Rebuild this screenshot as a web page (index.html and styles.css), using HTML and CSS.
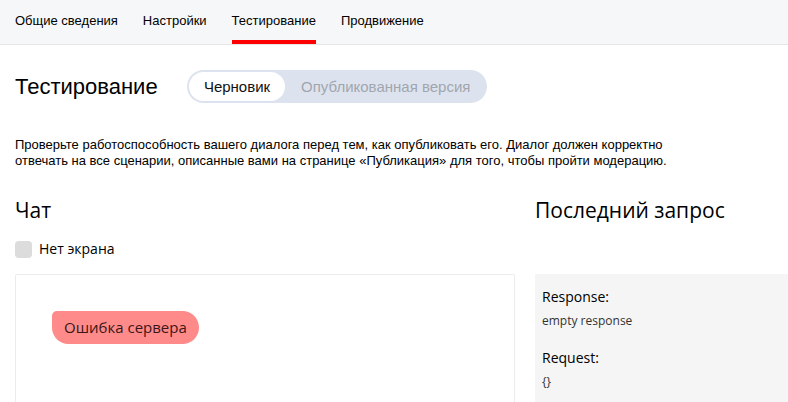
FILE: index.html
```html
<!DOCTYPE html>
<html lang="ru">
<head>
    <meta charset="UTF-8">
    <meta name="viewport" content="width=device-width, initial-scale=1.0">
    <title>Тестирование</title>
    <link rel="stylesheet" href="styles.css">
</head>
<body>
    <!-- top tabs -->
    <div class="tabs">
        <a class="tab">Общие сведения</a>
        <a class="tab">Настройки</a>
        <a class="tab tab-active">Тестирование</a>
        <a class="tab">Продвижение</a>
    </div>

    <div class="page">
        <div class="head">
            <h1 class="title">Тестирование</h1>
            <div class="switch">
                <span class="switch-item switch-on">Черновик</span>
                <span class="switch-item">Опубликованная версия</span>
            </div>
        </div>

        <p class="hint">Проверьте работоспособность вашего диалога перед тем, как опубликовать его. Диалог должен корректно отвечать на все сценарии, описанные вами на странице «Публикация» для того, чтобы пройти модерацию.</p>

        <div class="columns">
            <div class="col-chat">
                <h2 class="subtitle">Чат</h2>
                <label class="check">
                    <span class="check-box"></span>
                    Нет экрана
                </label>
                <div class="chat">
                    <div class="bubble">Ошибка сервера</div>
                </div>
            </div>

            <div class="col-log">
                <h2 class="subtitle">Последний запрос</h2>
                <div class="log">
                    <div class="log-label">Response:</div>
                    <div class="log-value">empty response</div>
                    <div class="log-label log-gap">Request:</div>
                    <div class="log-value">{}</div>
                </div>
            </div>
        </div>
    </div>
</body>
</html>
```

FILE: styles.css
```css
/* basic */
html, body {
    margin: 0;
    padding: 0;
    overflow: hidden;
}

body {
    font-family: "Liberation Sans", Arial, sans-serif;
    color: #000;
    background: #fff;
}

/* tabs line */
.tabs {
    display: flex;
    gap: 25px;
    height: 44px;
    padding: 0 15px;
    background: #f6f7f8;
    border-bottom: 1px solid #e6e6e6;
}

.tab {
    display: block;
    font-size: 13px;
    line-height: 16px;
    padding-top: 13px;
    color: #000;
    box-sizing: border-box;
    height: 44px;
}

.tab-active {
    border-bottom: 4px solid #f00;
}

/* right side runs to the window edge */
.page {
    padding: 0 0 0 15px;
}

.head {
    display: flex;
    align-items: center;
    padding-top: 25px;
}

.title {
    margin: 0;
    font-size: 22px;
    font-weight: normal;
    line-height: 28px;
    width: 172px;
}

/* draft / published switch */
.switch {
    display: flex;
    width: 300px;
    height: 33px;
    padding: 2px;
    box-sizing: border-box;
    background: #dde3ee;
    border-radius: 17px;
    white-space: nowrap;
}

.switch-item {
    font-size: 15px;
    line-height: 29px;
    padding: 0 16px;
    color: #a1a6ae;
    border-radius: 15px;
}

.switch-on {
    background: #fff;
    color: #111;
    width: 96px;
    flex: 0 0 96px;
    box-sizing: border-box;
    text-align: center;
    padding: 0;
}

.hint {
    margin: 34px 0 0;
    font-size: 13px;
    line-height: 16px;
    width: 675px;
}

.columns {
    display: flex;
    gap: 20px;
    margin-top: 27px;
}

.col-chat {
    flex: 0 0 500px;
}

.col-log {
    flex: 1;
    min-width: 0;
}

.subtitle {
    margin: 0;
    font-family: "Open Sans", "Noto Sans", sans-serif;
    font-size: 21px;
    font-weight: normal;
    line-height: 28px;
}

.check {
    display: flex;
    align-items: center;
    gap: 7px;
    margin-top: 15px;
    font-family: "Open Sans", "Noto Sans", sans-serif;
    font-size: 14px;
    line-height: 20px;
}

.check-box {
    width: 17px;
    height: 17px;
    border-radius: 4px;
    background: #dcdcdc;
}

.chat {
    margin-top: 15px;
    height: 160px;
    border: 1px solid #ececec;
    border-radius: 2px;
    padding: 36px;
}

.bubble {
    display: inline-block;
    height: 33px;
    line-height: 33px;
    padding: 0 12px;
    font-family: "Open Sans", "Noto Sans", sans-serif;
    font-size: 15px;
    color: #3b1616;
    background: #ff8a8a;
    border-radius: 5px 17px 17px 17px;
}

.log {
    margin-top: 50px;
    height: 160px;
    background: #f5f5f5;
    padding: 13px 7px;
    font-family: "Open Sans", "Noto Sans", sans-serif;
}

.log-label {
    font-size: 14px;
    line-height: 20px;
}

.log-value {
    font-size: 12px;
    line-height: 18px;
    margin-top: 5px;
    color: #333;
}

.log-gap {
    margin-top: 18px;
}
```
